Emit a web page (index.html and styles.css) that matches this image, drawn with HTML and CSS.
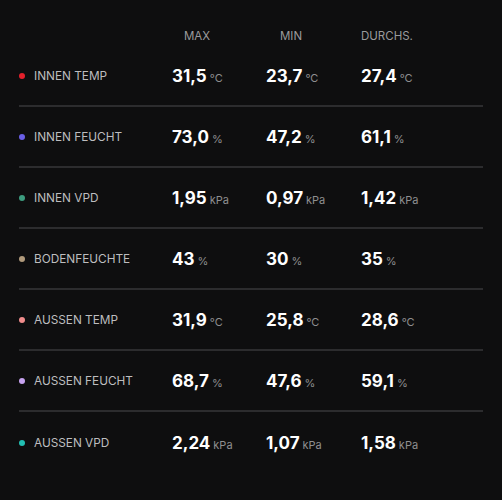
FILE: index.html
```html
<!DOCTYPE html>
<html lang="de">
<head>
    <meta charset="UTF-8">
    <meta name="viewport" content="width=device-width, initial-scale=1.0">
    <title>Klima Statistik</title>
    <link rel="stylesheet" href="styles.css">
</head>
<body>
    <div class="stats-table">
        <!-- Header -->
        <div class="stats-row head-row">
            <div></div>
            <div class="col-head"><span>MAX</span></div>
            <div class="col-head"><span>MIN</span></div>
            <div class="col-head"><span>DURCHS.</span></div>
        </div>

        <div class="stats-row">
            <div class="sensor"><span class="dot dot-red"></span>INNEN TEMP</div>
            <div class="val">31,5<span class="unit">°C</span></div>
            <div class="val">23,7<span class="unit">°C</span></div>
            <div class="val">27,4<span class="unit">°C</span></div>
        </div>
        <div class="stats-row">
            <div class="sensor"><span class="dot dot-blue"></span>INNEN FEUCHT</div>
            <div class="val">73,0<span class="unit">%</span></div>
            <div class="val">47,2<span class="unit">%</span></div>
            <div class="val">61,1<span class="unit">%</span></div>
        </div>
        <div class="stats-row">
            <div class="sensor"><span class="dot dot-green"></span>INNEN VPD</div>
            <div class="val">1,95<span class="unit">kPa</span></div>
            <div class="val">0,97<span class="unit">kPa</span></div>
            <div class="val">1,42<span class="unit">kPa</span></div>
        </div>
        <div class="stats-row">
            <div class="sensor"><span class="dot dot-tan"></span>BODENFEUCHTE</div>
            <div class="val">43<span class="unit">%</span></div>
            <div class="val">30<span class="unit">%</span></div>
            <div class="val">35<span class="unit">%</span></div>
        </div>
        <div class="stats-row">
            <div class="sensor"><span class="dot dot-pink"></span>AUSSEN TEMP</div>
            <div class="val">31,9<span class="unit">°C</span></div>
            <div class="val">25,8<span class="unit">°C</span></div>
            <div class="val">28,6<span class="unit">°C</span></div>
        </div>
        <div class="stats-row">
            <div class="sensor"><span class="dot dot-lilac"></span>AUSSEN FEUCHT</div>
            <div class="val">68,7<span class="unit">%</span></div>
            <div class="val">47,6<span class="unit">%</span></div>
            <div class="val">59,1<span class="unit">%</span></div>
        </div>
        <div class="stats-row last">
            <div class="sensor"><span class="dot dot-teal"></span>AUSSEN VPD</div>
            <div class="val">2,24<span class="unit">kPa</span></div>
            <div class="val">1,07<span class="unit">kPa</span></div>
            <div class="val">1,58<span class="unit">kPa</span></div>
        </div>
    </div>
</body>
</html>
```

FILE: styles.css
```css
* {
    margin: 0;
    padding: 0;
    box-sizing: border-box;
}

body {
    font-family: Inter, 'Noto Sans', sans-serif;
    background: #0e0e0f;
    color: #fff;
    padding: 26px 19px 0;
    min-height: 100vh;
}

.stats-table { width: 464px; }

.stats-row {
    display: grid;
    grid-template-columns: 153px 94px 95px 1fr;
    align-items: center;
    height: 61px;
    border-bottom: 2px solid #2c2c2e;
}
.stats-row.last { border-bottom: none; }

.head-row { height: 20px; border-bottom: none; }
.col-head span { display: block; width: 50px; text-align: center; font-size: 11.5px; color: #9a9a9c; }

.sensor { display: flex; align-items: center; font-size: 11.8px; color: #bdbdbf; }
.dot { width: 6px; height: 6px; border-radius: 50%; margin: 0 9px 0 0; flex-shrink: 0; }
.dot-red { background: #e3202b; }
.dot-blue { background: #6a5fe6; }
.dot-green { background: #3d9c7f; }
.dot-tan { background: #b09a7c; }
.dot-pink { background: #f08c8c; }
.dot-lilac { background: #c7a3f0; }
.dot-teal { background: #22bfb3; }

.val { font-size: 17px; font-weight: 700; color: #fff; }
.unit { font-size: 11px; font-weight: 400; color: #8e8e90; margin-left: 3px; }
```
